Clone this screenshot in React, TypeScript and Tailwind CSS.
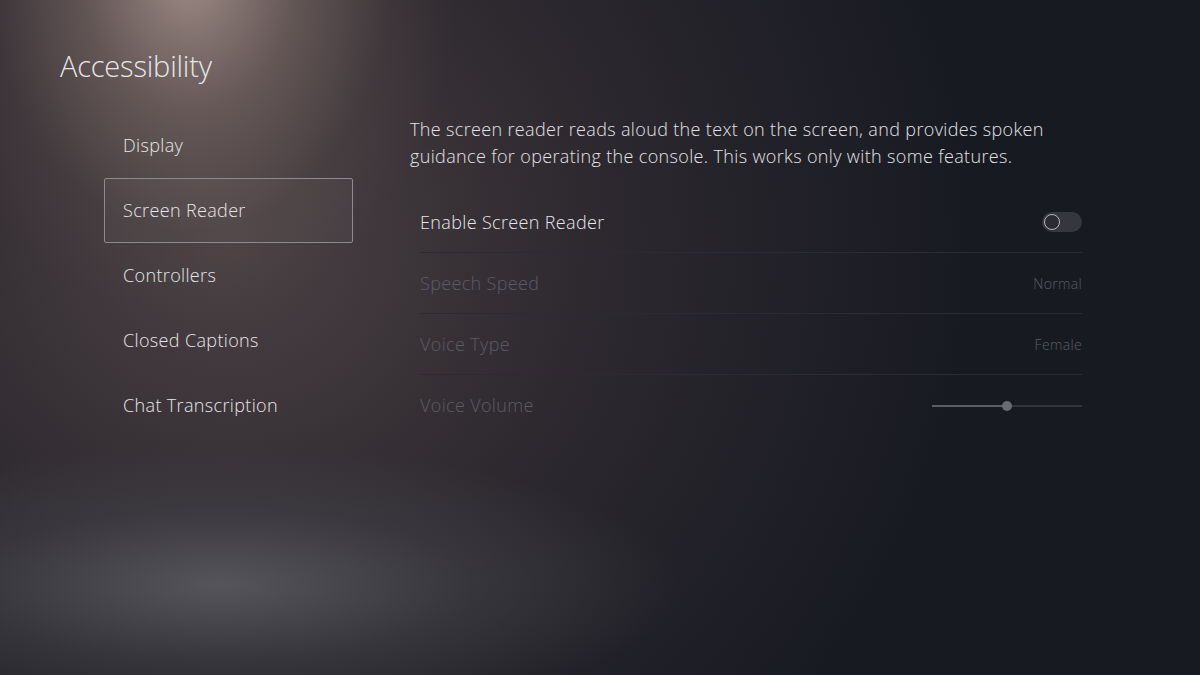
import React from 'react'

const menu = ['Display', 'Screen Reader', 'Controllers', 'Closed Captions', 'Chat Transcription']

const Toggle = () => (
  <div className="w-[40px] h-[20px] rounded-full bg-[#35363e] flex items-center px-[2px]">
    <div className="w-[16px] h-[16px] rounded-full border-[1.5px] border-[#b9b9bd] bg-[#2a2b33]" />
  </div>
)

const Slider = ({ value }: { value: number }) => (
  <div className="relative w-[150px] h-[12px] flex items-center">
    <div className="w-full h-[2px] bg-[#33343b]" />
    <div className="absolute left-0 h-[2px] bg-[#5d5e64]" style={{ width: `${value}%` }} />
    <div
      className="absolute w-[10px] h-[10px] rounded-full bg-[#6a6b71] -translate-x-1/2"
      style={{ left: `${value}%` }}
    />
  </div>
)

const App = () => {
  return (
    <main
      className="w-full h-[675px] overflow-hidden text-[#e6e6e8] bg-[#181a22] font-[350] tracking-[0.35px]"
      style={{
        fontFamily: '"Open Sans", "Noto Sans", sans-serif',
        backgroundImage:
          'radial-gradient(ellipse 270px 350px at 190px -30px, rgba(170,150,142,0.9) 0%, rgba(128,110,106,0.6) 40%, rgba(90,76,76,0.25) 75%, rgba(60,50,52,0) 100%), radial-gradient(ellipse 460px 140px at 220px 585px, rgba(92,92,98,0.85) 0%, rgba(66,66,72,0.55) 55%, rgba(44,44,50,0) 100%), radial-gradient(ellipse 740px 720px at 230px 240px, rgba(84,72,74,0.85) 0%, rgba(58,50,55,0.6) 50%, rgba(24,26,34,0) 100%)',
      }}
    >
      <div className="pl-[60px] pt-[48px]">
        <h1 className="text-[29px] leading-[36px] font-light tracking-[-0.2px]">Accessibility</h1>
      </div>

      <div className="flex mt-[29px] pl-[104px]">
        <nav className="w-[249px] flex flex-col">
          {menu.map((item) => (
            <div
              key={item}
              className={`h-[65px] flex items-center px-[18px] rounded-[2px] text-[18px] border ${
                item === 'Screen Reader' ? 'border-[#8a8a8f] bg-[#ffffff08]' : 'border-transparent'
              }`}
            >
              {item}
            </div>
          ))}
        </nav>

        <section className="ml-[57px] pt-[3px] w-[720px]">
          <p className="text-[18px] leading-[27px] text-[#e2e2e4]">
            The screen reader reads aloud the text on the screen, and provides spoken
            <br />
            guidance for operating the console. This works only with some features.
          </p>

          <div className="ml-[10px] mt-[22px] w-[662px]">
            <div className="h-[61px] flex items-center justify-between border-b border-[#2a2c34]">
              <span className="text-[18px]">Enable Screen Reader</span>
              <Toggle />
            </div>
            <div className="h-[61px] flex items-center justify-between border-b border-[#2a2c34] text-[#5a5c63]">
              <span className="text-[18px]">Speech Speed</span>
              <span className="text-[14px]">Normal</span>
            </div>
            <div className="h-[61px] flex items-center justify-between border-b border-[#2a2c34] text-[#5a5c63]">
              <span className="text-[18px]">Voice Type</span>
              <span className="text-[14px]">Female</span>
            </div>
            <div className="h-[61px] flex items-center justify-between text-[#5a5c63]">
              <span className="text-[18px]">Voice Volume</span>
              <Slider value={50} />
            </div>
          </div>
        </section>
      </div>
    </main>
  )
}

export default App
